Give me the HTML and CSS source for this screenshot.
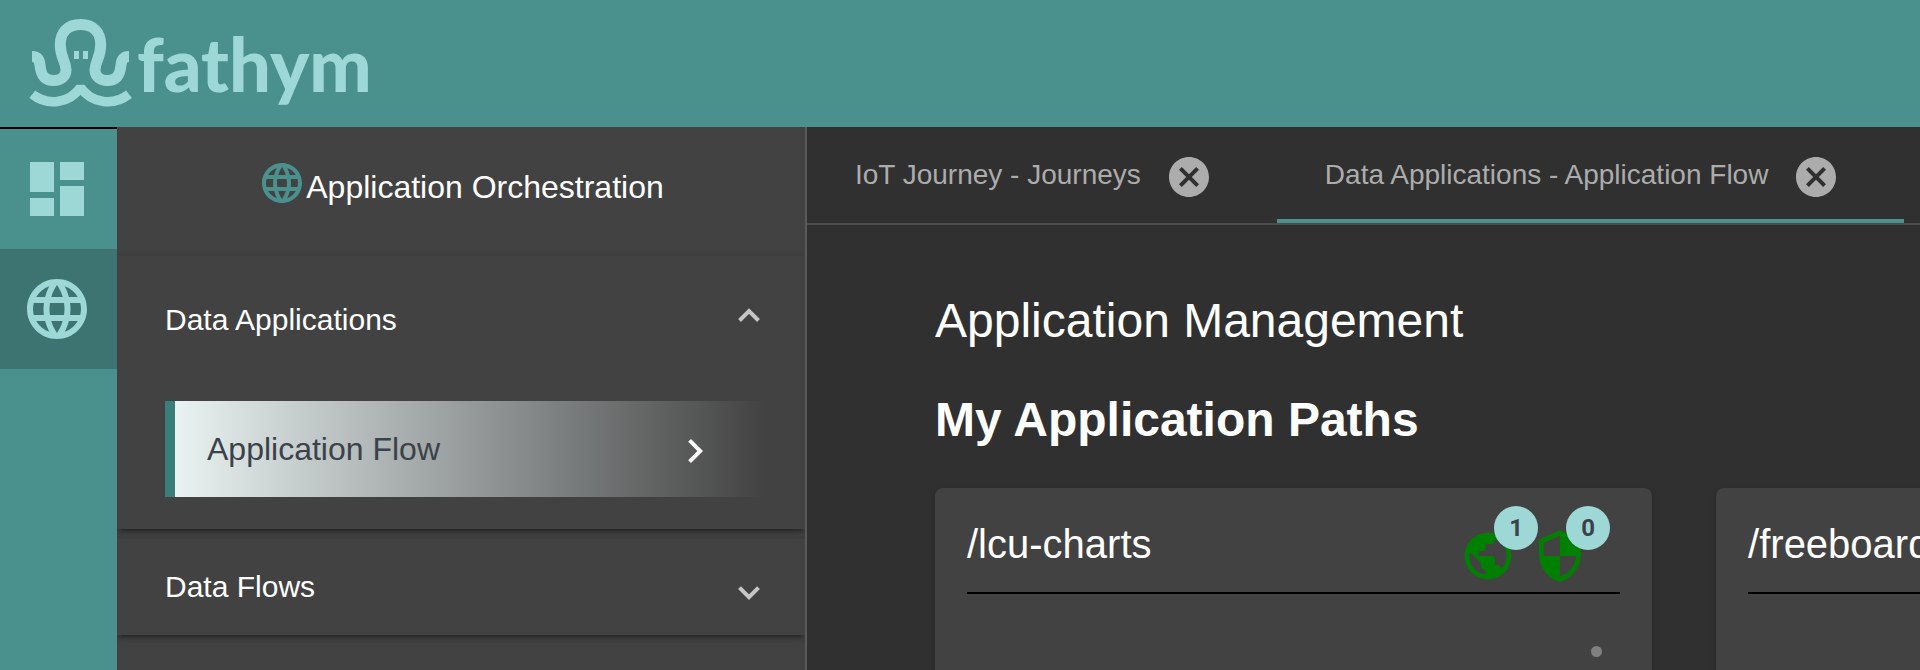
FILE: index.html
```html
<!DOCTYPE html>
<html lang="en">
<head>
<meta charset="utf-8">
<title>Fathym - Application Orchestration</title>
<link rel="stylesheet" href="styles.css">
</head>
<body>
<svg class="sprite" aria-hidden="true">
  <symbol id="language" viewBox="0 0 24 24"><path d="M11.99 2C6.47 2 2 6.48 2 12s4.47 10 9.99 10C17.52 22 22 17.52 22 12S17.52 2 11.99 2zm6.93 6h-2.95c-.32-1.25-.78-2.45-1.38-3.56 1.84.63 3.37 1.91 4.33 3.56zM12 4.04c.83 1.2 1.48 2.53 1.91 3.96h-3.82c.43-1.43 1.08-2.76 1.91-3.96zM4.26 14C4.1 13.36 4 12.69 4 12s.1-1.36.26-2h3.38c-.08.66-.14 1.32-.14 2s.06 1.34.14 2H4.26zm.82 2h2.95c.32 1.25.78 2.45 1.38 3.56-1.84-.63-3.37-1.9-4.33-3.56zm2.95-8H5.08c.96-1.66 2.49-2.93 4.33-3.56C8.81 5.55 8.35 6.75 8.03 8zM12 19.96c-.83-1.2-1.48-2.53-1.91-3.96h3.82c-.43 1.43-1.08 2.76-1.91 3.96zM14.34 14H9.66c-.09-.66-.16-1.32-.16-2s.07-1.35.16-2h4.68c.09.65.16 1.32.16 2s-.07 1.34-.16 2zm.25 5.56c.6-1.11 1.06-2.31 1.38-3.56h2.95c-.96 1.65-2.49 2.93-4.33 3.56zM16.36 14c.08-.66.14-1.32.14-2s-.06-1.34-.14-2h3.38c.16.64.26 1.31.26 2s-.1 1.36-.26 2h-3.38z"/></symbol>
  <symbol id="cancel" viewBox="0 -1 24 24"><path d="M12 2C6.47 2 2 6.47 2 12s4.47 10 10 10 10-4.47 10-10S17.53 2 12 2zm5 13.59L15.59 17 12 13.41 8.41 17 7 15.59 10.59 12 7 8.41 8.41 7 12 10.59 15.59 7 17 8.41 13.41 12 17 15.59z"/></symbol>
  <symbol id="public" viewBox="0 0 24 24"><path d="M12 2C6.48 2 2 6.48 2 12s4.48 10 10 10 10-4.48 10-10S17.52 2 12 2zm-1 17.93c-3.95-.49-7-3.85-7-7.93 0-.62.08-1.21.21-1.79L9 15v1c0 1.1.9 2 2 2v1.93zm6.9-2.54c-.26-.81-1-1.39-1.9-1.39h-1v-3c0-.55-.45-1-1-1H8v-2h2c.55 0 1-.45 1-1V7h2c1.1 0 2-.9 2-2v-.41c2.93 1.19 5 4.06 5 7.41 0 2.08-.8 3.97-2.1 5.39z"/></symbol>
  <symbol id="security" viewBox="0 0 24 24"><path d="M12 1L3 5v6c0 5.55 3.84 10.74 9 12 5.16-1.26 9-6.45 9-12V5l-9-4zm0 10.99h7c-.53 4.12-3.28 7.79-7 8.94V12H5V6.3l7-3.11v8.8z"/></symbol>
</svg>

<header class="topbar">
  <a class="brand" href="#" aria-label="fathym home">
    <svg class="brand-logo" viewBox="0 0 400 127">
      <g fill="none" stroke="currentColor">
        <path stroke-width="11" d="M32 56.5C37.500 56.500 39.500 60 40 65C41 76 45 80.500 53.500 80.500C62 80.500 66 75.500 66 70C66 61 60.300 58 60.300 44.500C60.300 33 67 24.500 80.500 24.500C94 24.500 100.700 33 100.700 44.500C100.700 58 95 61 95 70C95 75.500 99 80.500 107.500 80.500C116 80.500 120 76 121 65C121.500 60 123.500 56.500 129 56.500"/>
        <path stroke-width="9.500" stroke-linejoin="bevel" d="M32.300 94.300C47 106 69 104 80.500 87.500C92 104 114 106 129 94.300"/>
      </g>
      <path fill="currentColor" d="M74 51h5v8h-5zM83 51h5v8h-5z"/>
      <text class="brand-name" x="137" y="92">fathym</text>
    </svg>
  </a>
</header>

<div class="shell">
  <nav class="rail" aria-label="Activities">
    <a class="rail-item" href="#" aria-label="Dashboard">
      <svg class="icon-72" viewBox="0 0 24 24"><path d="M3 13h8V3H3v10zm0 8h8v-6H3v6zm10 0h8V11h-8v10zm0-18v6h8V3h-8z"/></svg>
    </a>
    <a class="rail-item rail-item-active" href="#" aria-label="Application Orchestration">
      <svg class="icon-72"><use href="#language"/></svg>
    </a>
  </nav>

  <aside class="side">
    <div class="side-title">
      <svg class="icon-48"><use href="#language"/></svg>
      <span>Application Orchestration</span>
    </div>
    <section class="panel">
      <button class="panel-head panel-head-open" type="button" aria-expanded="true">
        <span>Data Applications</span>
        <svg class="chevron" viewBox="0 0 32 32"><path d="M6.500 16.500L16 7L25.500 16.500"/></svg>
      </button>
      <div class="panel-body">
        <a class="flow-link" href="#">
          <span>Application Flow</span>
          <svg class="icon-48" viewBox="0 -1 24 24"><path d="M10 6L8.590 7.410 13.170 12l-4.580 4.590L10 18l6-6z"/></svg>
        </a>
      </div>
    </section>
    <section class="panel">
      <button class="panel-head" type="button" aria-expanded="false">
        <span>Data Flows</span>
        <svg class="chevron" viewBox="0 0 32 32"><path d="M6.500 16.700L16 26.200L25.500 16.700"/></svg>
      </button>
    </section>
  </aside>

  <main class="main">
    <div class="tabs">
      <div class="tab">
        <a href="#">IoT Journey - Journeys</a>
        <button class="tab-close" type="button" aria-label="Close IoT Journey"><svg class="icon-48"><use href="#cancel"/></svg></button>
      </div>
      <div class="tab tab-active">
        <a href="#">Data Applications - Application Flow</a>
        <button class="tab-close" type="button" aria-label="Close Data Applications"><svg class="icon-48"><use href="#cancel"/></svg></button>
      </div>
    </div>
    <div class="content">
      <h1>Application Management</h1>
      <h2>My Application Paths</h2>
      <div class="cards">
        <article class="card">
          <div class="card-head">
            <h3>/lcu-charts</h3>
            <div class="card-stats">
              <span class="stat"><svg class="icon-56"><use href="#public"/></svg><span class="badge">1</span></span>
              <span class="stat"><svg class="icon-56"><use href="#security"/></svg><span class="badge">0</span></span>
            </div>
          </div>
          <div class="dot"></div>
        </article>
        <article class="card">
          <div class="card-head">
            <h3>/freeboard</h3>
          </div>
        </article>
      </div>
    </div>
  </main>
</div>
</body>
</html>
```

FILE: styles.css
```css
* { box-sizing: border-box; }

body {
  margin: 0;
  height: 100vh;
  overflow: hidden;
  display: flex;
  flex-direction: column;
  background: #303030;
  color: #fff;
  font-family: "Liberation Sans", Arial, sans-serif;
}

a { color: inherit; text-decoration: none; }
button { border: 0; padding: 0; background: none; color: inherit; font: inherit; cursor: pointer; }
h1, h2, h3 { margin: 0; font-weight: 400; }
svg { display: block; flex: none; fill: currentColor; }

.sprite { position: absolute; width: 0; height: 0; }
.icon-48 { width: 48px; height: 48px; }
.icon-56 { width: 56px; height: 56px; }
.icon-72 { width: 72px; height: 72px; }

.topbar { flex: none; background: #4a918d; }
.brand { display: inline-block; vertical-align: top; color: #9dd8d7; }
.brand-logo { width: 400px; height: 127px; }
.brand-name { font: 900 74px Lato, sans-serif; }

.shell { flex: 1; min-height: 0; display: flex; }

.rail {
  flex: none;
  width: 117px;
  border-top: 2px solid #000;
  background: #4a918d;
  color: #9dd8d7;
}
.rail-item {
  display: flex;
  align-items: center;
  justify-content: center;
  height: 120px;
  padding-right: 3px;
}
.rail-item-active { background: #3d7472; }

.side {
  flex: none;
  width: 690px;
  overflow: hidden;
  border-right: 2px solid #5a5a5a;
  background: #424242;
}
.side-title {
  display: flex;
  justify-content: center;
  height: 129px;
  padding-top: 32px;
  font-size: 32px;
  line-height: 56px;
}
.side-title svg { color: #4a918d; }

.panel {
  margin-bottom: 10px;
  background: #424242;
  box-shadow: 0 6px 2px -4px rgba(0, 0, 0, .2), 0 4px 4px rgba(0, 0, 0, .14), 0 2px 10px rgba(0, 0, 0, .12);
}
.panel-head {
  display: flex;
  align-items: center;
  justify-content: space-between;
  width: 100%;
  height: 96px;
  padding: 0 40px 0 48px;
  font-size: 30px;
}
.panel-head-open { height: 128px; }
.chevron { width: 32px; height: 32px; fill: none; stroke: #c6c6c6; stroke-width: 4; }
.panel-body { padding: 17px 40px 32px 48px; }
.flow-link {
  display: flex;
  align-items: center;
  justify-content: space-between;
  height: 96px;
  padding: 0 46px 0 32px;
  border-left: 10px solid #3a7f7b;
  background: linear-gradient(to right, #e9f3f2, #424242);
  color: #3b424a;
  font-size: 32px;
}
.flow-link svg { color: #fff; }

.main { flex: 1; min-width: 0; display: flex; flex-direction: column; overflow: hidden; }
.tabs { flex: none; display: flex; border-bottom: 2px solid #4b4b4b; color: #acacac; font-size: 28px; }
.tab {
  position: relative;
  display: flex;
  align-items: center;
  gap: 24px;
  height: 96px;
  padding: 0 64px 0 48px;
  white-space: nowrap;
}
.tab-active::after {
  content: "";
  position: absolute;
  left: 0;
  right: 0;
  bottom: 0;
  height: 4px;
  background: #4a918d;
}

.content { flex: 1; min-height: 0; display: flex; flex-direction: column; padding: 64px 0 0 128px; }
h1, h2 { font-size: 48px; line-height: 64px; }
h1 { margin-bottom: 35px; }
h2 { margin-bottom: 36px; font-weight: 700; }

.cards { flex: 1; display: flex; gap: 64px; }
.card {
  flex: 0 0 72.8%;
  padding: 32px;
  border-radius: 8px 8px 0 0;
  background: #424242;
  box-shadow: 0 4px 2px -2px rgba(0, 0, 0, .2), 0 2px 2px rgba(0, 0, 0, .14), 0 2px 6px rgba(0, 0, 0, .12);
}
.card-head {
  display: flex;
  justify-content: space-between;
  height: 74px;
  border-bottom: 2px solid #000;
}
.card-head h3 { font-size: 40px; line-height: 48px; }
.card-stats { display: flex; align-items: center; gap: 16px; padding-right: 32px; color: #008000; }
.stat { position: relative; }
.badge {
  position: absolute;
  top: -22px;
  right: -22px;
  width: 44px;
  height: 44px;
  border-radius: 50%;
  background: #9dd8d7;
  color: #3b424a;
  font: 700 24px/44px Roboto, sans-serif;
  text-align: center;
}
.dot { width: 11px; height: 11px; margin: 52px 18px 0 auto; border-radius: 50%; background: #808080; }
```
